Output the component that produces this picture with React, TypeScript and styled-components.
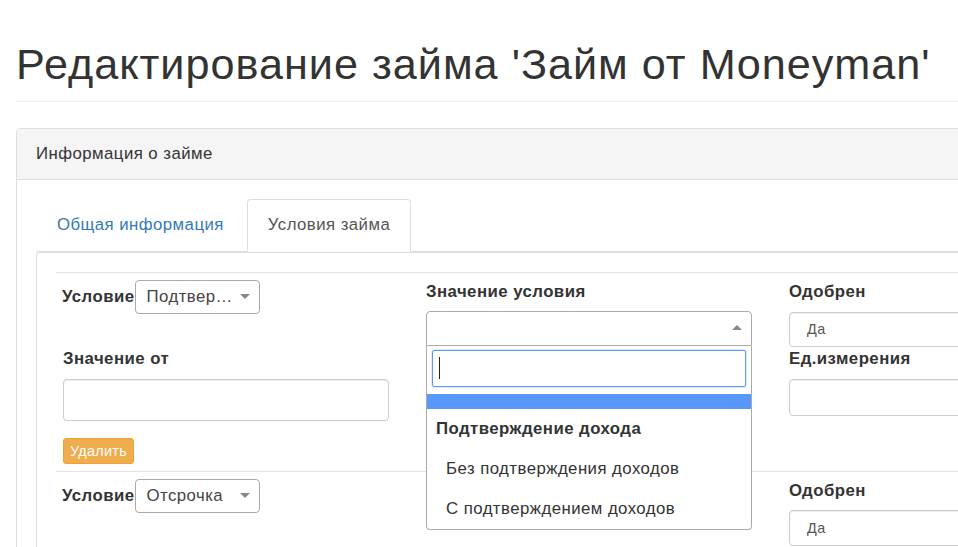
import React from "react";
import styled, { createGlobalStyle } from "styled-components";

const GlobalStyle = createGlobalStyle`
  html, body { margin: 0; padding: 0; background: #fff; }
  body {
    font-family: "Liberation Sans", Arial, sans-serif;
    color: #333;
    font-size: 16.8px;
    line-height: 24px;
    letter-spacing: 0.45px;
    width: 958px;
    height: 547px;
    overflow: hidden;
  }
  * { box-sizing: border-box; }
`;

const Page = styled.div`
  width: 1300px;
  padding-left: 16px;
`;

const PageHeader = styled.div`
  margin-top: 41px;
  padding-bottom: 12px;
  border-bottom: 1px solid #eee;
  margin-bottom: 26px;
`;

const Title = styled.h1`
  margin: 0;
  font-size: 43.2px;
  line-height: 47.5px;
  font-weight: 400;
  letter-spacing: 1px;
  color: #333;
`;

const Panel = styled.div`
  border: 1px solid #ddd;
  border-radius: 4px;
  background: #fff;
  box-shadow: 0 1px 1px rgba(0, 0, 0, 0.05);
`;

const PanelHeading = styled.div`
  background: #f5f5f5;
  border-bottom: 1px solid #ddd;
  border-radius: 3px 3px 0 0;
  padding: 13px 19px;
  color: #333;
`;

const PanelBody = styled.div`
  padding: 19px 0 0 19px;
`;

const Tabs = styled.ul`
  display: flex;
  list-style: none;
  margin: 0;
  padding: 0;
  border-bottom: 1px solid #ddd;
`;

const Tab = styled.li<{ $active?: boolean }>`
  margin-right: 2px;
  margin-bottom: -1px;
  padding: 13px 20px 14px 20px;
  border: 1px solid ${(p) => (p.$active ? "#ddd" : "transparent")};
  border-bottom-color: transparent;
  border-radius: 4px 4px 0 0;
  background: ${(p) => (p.$active ? "#fff" : "transparent")};
  color: ${(p) => (p.$active ? "#555" : "#337ab7")};
`;

const TabContent = styled.div`
  border: 1px solid #ddd;
  border-right: none;
  border-bottom: none;
  border-radius: 4px 0 0 0;
  padding: 19px 0 0 19px;
`;

const Row = styled.div`
  border-top: 1px solid #e3e3e3;
  padding: 7px 0 7px 7px;
  display: grid;
  grid-template-columns: 326px 326px 326px;
  column-gap: 37px;
  align-items: start;
`;

const Col = styled.div`
  display: flex;
  flex-direction: column;
  align-items: flex-start;
`;

const InlineField = styled.div`
  display: flex;
  align-items: center;
  margin-left: -1px;
`;

const Label = styled.label<{ $mt?: number }>`
  display: block;
  font-weight: 700;
  color: #333;
  height: 24px;
  margin-top: ${(p) => p.$mt ?? 0}px;
`;

const Select2 = styled.div<{ $w?: number }>`
  position: relative;
  width: ${(p) => (p.$w ? `${p.$w}px` : "100%")};
  height: 34px;
  border: 1px solid #aaa;
  border-radius: 4px;
  padding-left: 11px;
  color: #444;
  line-height: 32px;
  background: #fff;
  white-space: nowrap;
`;

const Arrow = styled.span<{ $up?: boolean }>`
  position: absolute;
  right: 9px;
  top: 50%;
  margin-top: -3px;
  width: 0;
  height: 0;
  border-left: 5px solid transparent;
  border-right: 5px solid transparent;
  ${(p) =>
    p.$up ? "border-bottom: 5px solid #888;" : "border-top: 5px solid #888;"}
`;

const SelectWrap = styled.div`
  position: relative;
  width: 100%;
  margin-top: 7px;
`;

const OpenBox = styled.div`
  position: relative;
  height: 35px;
  border: 1px solid #aaa;
  border-radius: 4px 4px 0 0;
  background: #fff;
`;

const Dropdown = styled.div`
  position: absolute;
  top: 100%;
  left: 0;
  width: 100%;
  border: 1px solid #aaa;
  border-top: none;
  border-radius: 0 0 4px 4px;
  background: #fff;
  z-index: 10;
`;

const SearchBox = styled.div`
  margin: 4px 5px 0;
  height: 37px;
  border: 1px solid #5897fb;
  border-radius: 2px;
  box-shadow: 0 0 2px rgba(88, 151, 251, 0.7);
  display: flex;
  align-items: center;
  padding-left: 6px;
`;

const Caret = styled.span`
  width: 1px;
  height: 22px;
  background: #222;
`;

const HighlightBar = styled.div`
  margin-top: 7px;
  height: 15px;
  background: #5897fb;
`;

const OptionRow = styled.div<{ $group?: boolean }>`
  height: 40px;
  line-height: 40px;
  padding-left: ${(p) => (p.$group ? 9 : 19)}px;
  font-weight: ${(p) => (p.$group ? 700 : 400)};
  color: #333;
  white-space: nowrap;
`;

const FormControl = styled.div<{ $h: number; $mt?: number }>`
  width: 100%;
  height: ${(p) => p.$h}px;
  margin-top: ${(p) => p.$mt ?? 0}px;
  border: 1px solid #ccc;
  border-radius: 4px;
  box-shadow: inset 0 1px 1px rgba(0, 0, 0, 0.075);
  background: #fff;
  padding-left: 17px;
  display: flex;
  align-items: center;
  font-size: 14.4px;
  color: #555;
`;

const DangerButton = styled.button`
  margin-top: 17px;
  height: 26px;
  padding: 0 6px;
  border: 1px solid #eea236;
  border-radius: 3px;
  background: #f0ad4e;
  color: #fff;
  font-family: "Liberation Sans", Arial, sans-serif;
  font-size: 14.4px;
  letter-spacing: 0.3px;
  line-height: 24px;
`;

export default function App() {
  return (
    <>
      <GlobalStyle />
      <Page>
        <PageHeader>
          <Title>Редактирование займа 'Займ от Moneyman'</Title>
        </PageHeader>
        <Panel>
          <PanelHeading>Информация о займе</PanelHeading>
          <PanelBody>
            <Tabs>
              <Tab>Общая информация</Tab>
              <Tab $active>Условия займа</Tab>
            </Tabs>
            <TabContent>
              <Row>
                <Col>
                  <InlineField>
                    <Label>Условие</Label>
                    <Select2 $w={125}>
                      Подтвер…
                      <Arrow />
                    </Select2>
                  </InlineField>
                  <Label $mt={33}>Значение от</Label>
                  <FormControl $h={42} $mt={8} />
                  <DangerButton>Удалить</DangerButton>
                </Col>
                <Col>
                  <Label>Значение условия</Label>
                  <SelectWrap>
                    <OpenBox>
                      <Arrow $up />
                    </OpenBox>
                    <Dropdown>
                      <SearchBox>
                        <Caret />
                      </SearchBox>
                      <HighlightBar />
                      <OptionRow $group>Подтверждение дохода</OptionRow>
                      <OptionRow>Без подтверждения доходов</OptionRow>
                      <OptionRow>С подтверждением доходов</OptionRow>
                    </Dropdown>
                  </SelectWrap>
                </Col>
                <Col>
                  <Label>Одобрен</Label>
                  <FormControl $h={35} $mt={8}>Да</FormControl>
                  <Label>Ед.измерения</Label>
                  <FormControl $h={37} $mt={8} />
                </Col>
              </Row>
              <Row>
                <Col>
                  <InlineField>
                    <Label>Условие</Label>
                    <Select2 $w={125}>
                      Отсрочка
                      <Arrow />
                    </Select2>
                  </InlineField>
                </Col>
                <Col />
                <Col>
                  <Label>Одобрен</Label>
                  <FormControl $h={36} $mt={7}>Да</FormControl>
                </Col>
              </Row>
            </TabContent>
          </PanelBody>
        </Panel>
      </Page>
    </>
  );
}
